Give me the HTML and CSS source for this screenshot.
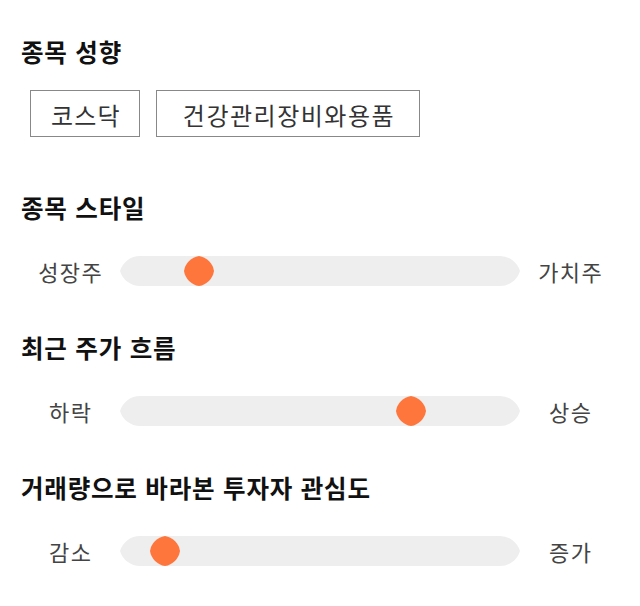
FILE: index.html
```html
<!DOCTYPE html>
<html lang="ko">
<head>
<meta charset="utf-8">
<link rel="stylesheet" href="styles.css">
</head>
<body>
<section class="group">
  <h2 class="title">종목 성향</h2>
  <div class="tags">
    <span class="tag">코스닥</span>
    <span class="tag tag-wide">건강관리장비와용품</span>
  </div>
</section>
<section class="group">
  <h2 class="title">종목 스타일</h2>
  <div class="slider-row">
    <span class="end">성장주</span>
    <div class="track">
      <svg class="track-bg" width="400" height="30" viewBox="0 0 400 30"><path d="M20 0 H380 A20.83 20.83 0 0 1 400 15 A20.83 20.83 0 0 1 380 30 H20 A20.83 20.83 0 0 1 0 15 A20.83 20.83 0 0 1 20 0 Z" fill="#eeeeee"/></svg>
      <svg class="thumb" style="left:64px" width="30" height="30" viewBox="0 0 30 30"><path d="M15 0 A18 18 0 0 1 30 15 A18 18 0 0 1 15 30 A18 18 0 0 1 0 15 A18 18 0 0 1 15 0 Z" fill="#ff763d"/></svg>
    </div>
    <span class="end">가치주</span>
  </div>
</section>
<section class="group">
  <h2 class="title">최근 주가 흐름</h2>
  <div class="slider-row">
    <span class="end">하락</span>
    <div class="track">
      <svg class="track-bg" width="400" height="30" viewBox="0 0 400 30"><path d="M20 0 H380 A20.83 20.83 0 0 1 400 15 A20.83 20.83 0 0 1 380 30 H20 A20.83 20.83 0 0 1 0 15 A20.83 20.83 0 0 1 20 0 Z" fill="#eeeeee"/></svg>
      <svg class="thumb" style="left:276px" width="30" height="30" viewBox="0 0 30 30"><path d="M15 0 A18 18 0 0 1 30 15 A18 18 0 0 1 15 30 A18 18 0 0 1 0 15 A18 18 0 0 1 15 0 Z" fill="#ff763d"/></svg>
    </div>
    <span class="end">상승</span>
  </div>
</section>
<section class="group">
  <h2 class="title">거래량으로 바라본 투자자 관심도</h2>
  <div class="slider-row">
    <span class="end">감소</span>
    <div class="track">
      <svg class="track-bg" width="400" height="30" viewBox="0 0 400 30"><path d="M20 0 H380 A20.83 20.83 0 0 1 400 15 A20.83 20.83 0 0 1 380 30 H20 A20.83 20.83 0 0 1 0 15 A20.83 20.83 0 0 1 20 0 Z" fill="#eeeeee"/></svg>
      <svg class="thumb" style="left:30px" width="30" height="30" viewBox="0 0 30 30"><path d="M15 0 A18 18 0 0 1 30 15 A18 18 0 0 1 15 30 A18 18 0 0 1 0 15 A18 18 0 0 1 15 0 Z" fill="#ff763d"/></svg>
    </div>
    <span class="end">증가</span>
  </div>
</section>
</body>
</html>
```
FILE: styles.css
```css
html, body {
  margin: 0;
  background: #ffffff;
}
body {
  padding: 37px 20px 0;
  font-family: "Noto Sans CJK KR", "Noto Sans", sans-serif;
  color: #333333;
}
.group {
  margin-bottom: 47px;
}
.group:first-child {
  margin-bottom: 56px;
}
.title {
  margin: 0;
  padding-left: 1px;
  font-size: 24.5px;
  font-weight: 700;
  line-height: 30px;
  color: #111111;
  letter-spacing: 0.8px;
}
.tags {
  display: flex;
  gap: 16px;
  margin: 23px 0 0 10px;
}
.tag {
  display: flex;
  align-items: center;
  justify-content: center;
  height: 47px;
  box-sizing: border-box;
  padding: 2px 18px 0 20px;
  border: 1px solid #888888;
  font-size: 24px;
  letter-spacing: 1.2px;
  color: #333333;
}
.tag-wide {
  padding: 2px 24px 0 26px;
  letter-spacing: 1.5px;
}
.slider-row {
  display: flex;
  align-items: center;
  margin-top: 33px;
  height: 30px;
}
.end {
  width: 100px;
  text-align: center;
  font-size: 22px;
  color: #444444;
  line-height: 30px;
  letter-spacing: 1.5px;
  text-indent: 1.5px;
}
.track {
  position: relative;
  width: 400px;
  height: 30px;
}
.track-bg {
  display: block;
}
.thumb {
  position: absolute;
  top: 0;
  display: block;
}
```
